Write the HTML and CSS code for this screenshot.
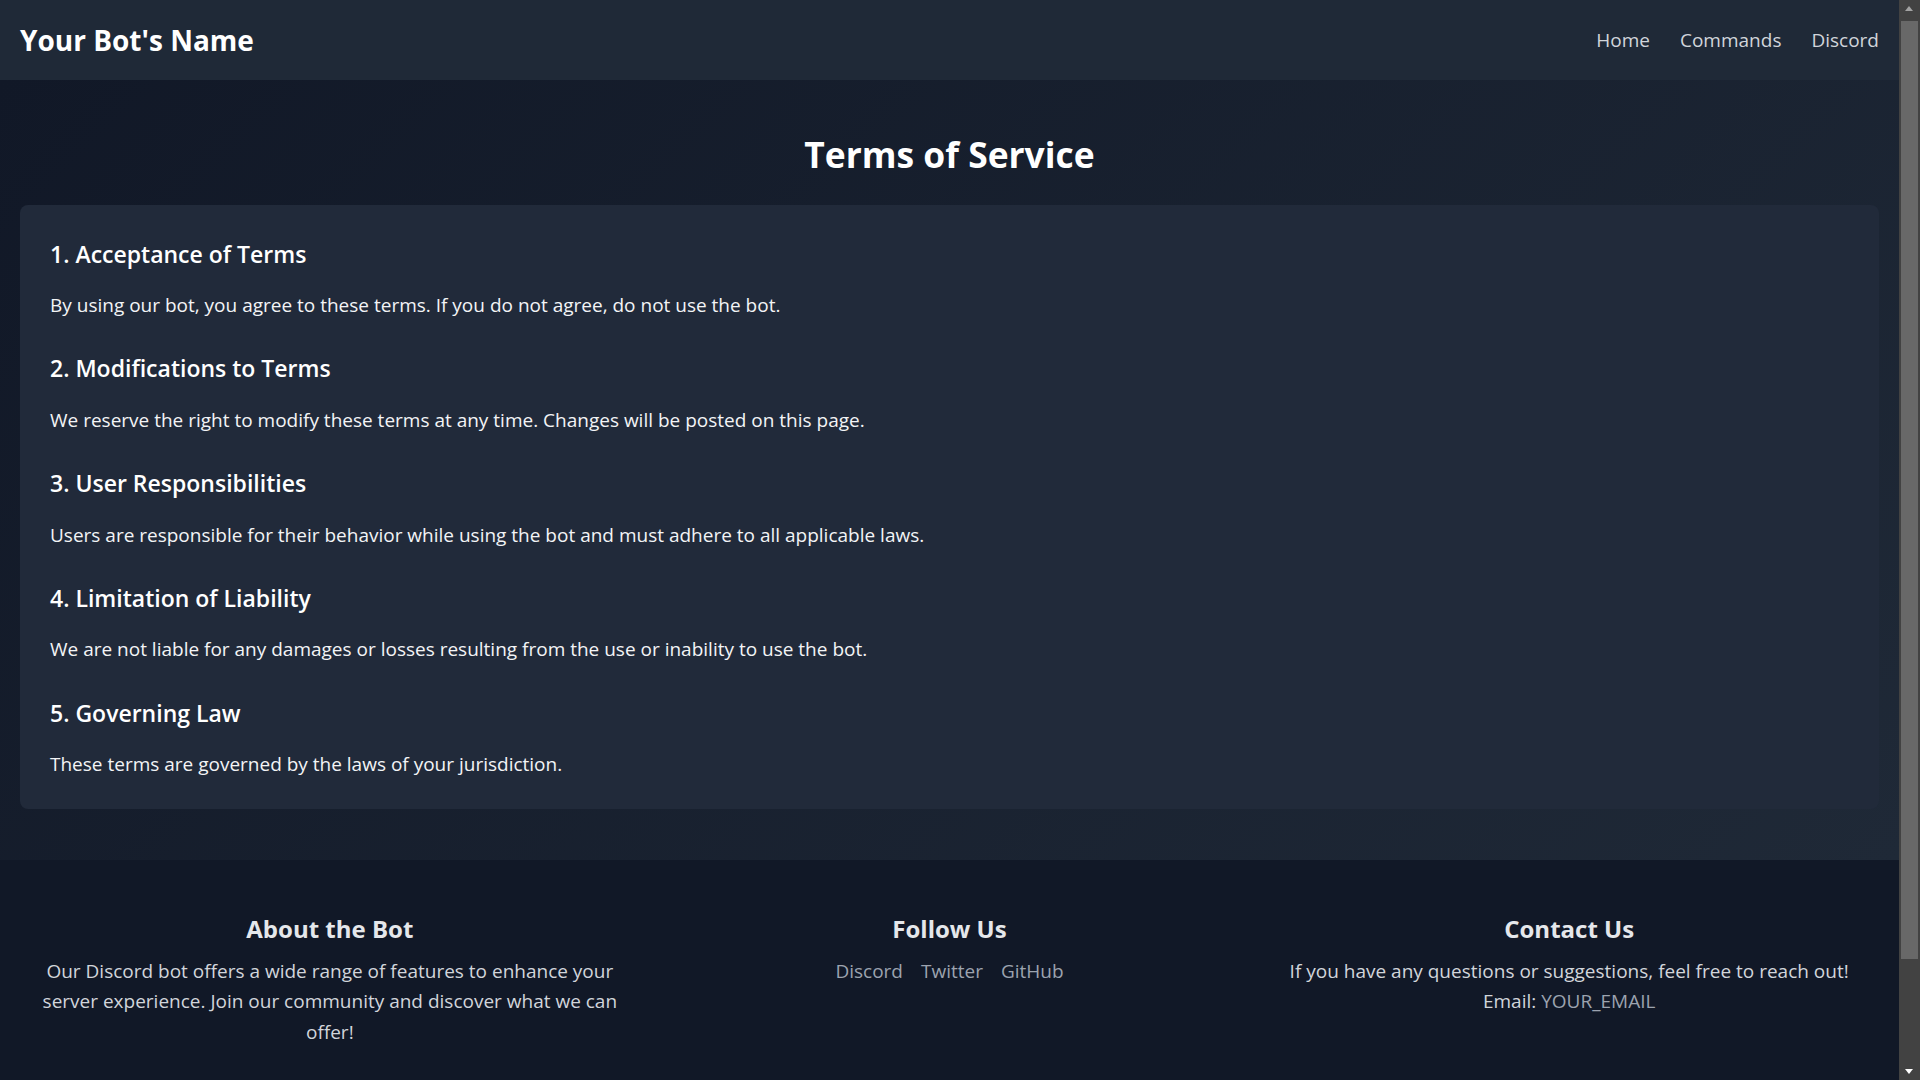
FILE: index.html
```html
<!DOCTYPE html>
<html lang="en">
<head>
<meta charset="UTF-8">
<title>Terms of Service - Your Bot's Name</title>
<link rel="stylesheet" href="styles.css">
</head>
<body>
<header class="navbar">
  <div class="logo">Your Bot's Name</div>
  <nav class="nav-links">
    <a href="#" class="nav-link">Home</a>
    <a href="#" class="nav-link">Commands</a>
    <a href="#" class="nav-link">Discord</a>
  </nav>
</header>

<main class="main">
  <h1 class="page-title">Terms of Service</h1>
  <div class="card">
    <section class="term">
      <h2 class="term-title">1. Acceptance of Terms</h2>
      <p class="term-text">By using our bot, you agree to these terms. If you do not agree, do not use the bot.</p>
    </section>
    <section class="term">
      <h2 class="term-title">2. Modifications to Terms</h2>
      <p class="term-text">We reserve the right to modify these terms at any time. Changes will be posted on this page.</p>
    </section>
    <section class="term">
      <h2 class="term-title">3. User Responsibilities</h2>
      <p class="term-text">Users are responsible for their behavior while using the bot and must adhere to all applicable laws.</p>
    </section>
    <section class="term">
      <h2 class="term-title">4. Limitation of Liability</h2>
      <p class="term-text">We are not liable for any damages or losses resulting from the use or inability to use the bot.</p>
    </section>
    <section class="term">
      <h2 class="term-title">5. Governing Law</h2>
      <p class="term-text">These terms are governed by the laws of your jurisdiction.</p>
    </section>
  </div>
</main>

<footer class="footer">
  <div class="footer-grid">
    <div class="footer-col">
      <h3 class="footer-title">About the Bot</h3>
      <p class="footer-text">Our Discord bot offers a wide range of features to enhance your server experience. Join our community and discover what we can offer!</p>
    </div>
    <div class="footer-col">
      <h3 class="footer-title">Follow Us</h3>
      <div class="social-links">
        <a href="#" class="footer-link">Discord</a>
        <a href="#" class="footer-link">Twitter</a>
        <a href="#" class="footer-link">GitHub</a>
      </div>
    </div>
    <div class="footer-col">
      <h3 class="footer-title">Contact Us</h3>
      <p class="footer-text">If you have any questions or suggestions, feel free to reach out!<br>Email: <a href="#" class="footer-link">YOUR_EMAIL</a></p>
    </div>
  </div>
</footer>

<div class="scrollbar" aria-hidden="true">
  <span class="scroll-arrow scroll-up"></span>
  <span class="scroll-thumb"></span>
  <span class="scroll-arrow scroll-down"></span>
</div>
</body>
</html>
```
FILE: styles.css
```css
* {
  box-sizing: border-box;
}

html, body {
  margin: 0;
  padding: 0;
}

body {
  margin-right: 21px;
  font-family: "Segoe UI", "Open Sans", sans-serif;
  line-height: 1.6;
  color: #f3f4f6;
  background: #111827;
}

a {
  text-decoration: none;
}

/* window scrollbar (drawn, as in the screenshot) */
.scrollbar {
  position: fixed;
  top: 0;
  right: 0;
  width: 21px;
  height: 100vh;
  background: #424242;
}

.scroll-thumb {
  position: absolute;
  top: 21px;
  left: 2px;
  right: 2px;
  height: 938px;
  background: #686868;
}

.scroll-arrow {
  position: absolute;
  left: 6px;
  width: 0;
  height: 0;
  border-left: 4.5px solid transparent;
  border-right: 4.5px solid transparent;
}

.scroll-up {
  top: 6px;
  border-bottom: 5px solid #a3a3a3;
}

.scroll-down {
  bottom: 6px;
  border-top: 5px solid #ffffff;
}

.navbar {
  display: flex;
  justify-content: space-between;
  align-items: center;
  height: 80px;
  padding: 1px 20px 0;
  background: #1f2937;
}

.logo {
  font-size: 28px;
  font-weight: 700;
  color: #ffffff;
}

.nav-links {
  display: flex;
  gap: 30px;
}

.nav-link {
  font-size: 19px;
  color: #d1d5db;
}

.main {
  padding: 20px;
  background: linear-gradient(135deg, #111827 0%, #1f2937 100%);
}

.page-title {
  margin: 26px 0 21px;
  font-size: 35.4px;
  line-height: 57.6px;
  font-weight: 700;
  text-align: center;
  color: #ffffff;
}

.card {
  background: #212a3a;
  border-radius: 8px;
  padding: 30px 30px 29px;
  margin-bottom: 31px;
}

.term-title {
  margin: 0 0 17px;
  font-size: 23px;
  line-height: 38.4px;
  font-weight: 600;
  color: #ffffff;
}

.term-text {
  margin: 0 0 29px;
  font-size: 19px;
  line-height: 30.4px;
  color: #f3f4f6;
}

.term:last-child .term-text {
  margin-bottom: 0;
}

.footer {
  background: #111827;
  padding: 50px 20px 40px;
}

.footer-grid {
  display: grid;
  grid-template-columns: repeat(3, 1fr);
  text-align: center;
}

.footer-col {
  padding: 0 20px;
}

.footer-title {
  margin: 0 0 8px;
  font-size: 24px;
  line-height: 38.4px;
  font-weight: 700;
  color: #e5e7eb;
}

.footer-text {
  margin: 0;
  font-size: 19px;
  line-height: 30.4px;
  color: #d1d5db;
}

.social-links {
  display: flex;
  justify-content: center;
  gap: 18px;
  font-size: 19px;
  line-height: 30.4px;
}

.footer-link {
  color: #9ca3af;
}
```
